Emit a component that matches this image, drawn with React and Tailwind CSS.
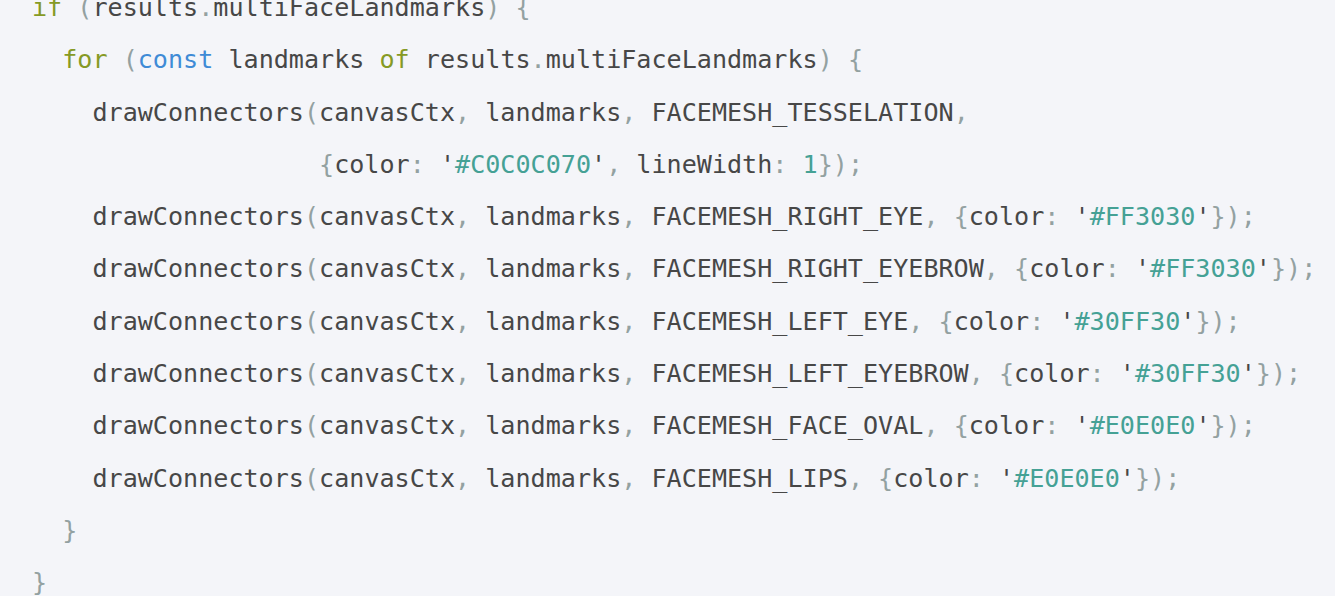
const lines = [
  "if (results.multiFaceLandmarks) {",
  "  for (const landmarks of results.multiFaceLandmarks) {",
  "    drawConnectors(canvasCtx, landmarks, FACEMESH_TESSELATION,",
  "                   {color: '#C0C0C070', lineWidth: 1});",
  "    drawConnectors(canvasCtx, landmarks, FACEMESH_RIGHT_EYE, {color: '#FF3030'});",
  "    drawConnectors(canvasCtx, landmarks, FACEMESH_RIGHT_EYEBROW, {color: '#FF3030'});",
  "    drawConnectors(canvasCtx, landmarks, FACEMESH_LEFT_EYE, {color: '#30FF30'});",
  "    drawConnectors(canvasCtx, landmarks, FACEMESH_LEFT_EYEBROW, {color: '#30FF30'});",
  "    drawConnectors(canvasCtx, landmarks, FACEMESH_FACE_OVAL, {color: '#E0E0E0'});",
  "    drawConnectors(canvasCtx, landmarks, FACEMESH_LIPS, {color: '#E0E0E0'});",
  "  }",
  "}",
];

const colors = {
  text: "text-[#474747]",
  punct: "text-[#93a1a1]",
  keyword: "text-[#869a25]",
  builtin: "text-[#3f8bd6]",
  string: "text-[#45a195]",
};

function tokenize(line) {
  const out = [];
  const re = /('[^']*')|(\b\d+\b)|([A-Za-z_][A-Za-z0-9_]*)|([(){},.:;])|(\s+)|(.)/g;
  let m;
  while ((m = re.exec(line))) {
    if (m[1]) {
      out.push(["'", "text"], [m[1].slice(1, -1), "string"], ["'", "text"]);
    } else if (m[2]) out.push([m[2], "string"]);
    else if (m[3]) {
      const w = m[3];
      if (w === "if" || w === "for" || w === "of") out.push([w, "keyword"]);
      else if (w === "const") out.push([w, "builtin"]);
      else out.push([w, "text"]);
    } else if (m[4]) out.push([m[4], "punct"]);
    else out.push([m[0], "text"]);
  }
  return out;
}

export default function App() {
  return (
    <div className="h-[614px] w-[1342px] overflow-hidden bg-white">
      <div className="h-full w-[1335px] bg-[#f4f5f9] pl-[32px]">
        <pre className="-mt-[18px] font-['DejaVu_Sans_Mono',monospace] text-[25.1px] leading-[52.3px] text-[#474747]">
          {lines.map((line, i) => (
            <div key={i} className="whitespace-pre">
              {tokenize(line).map(([t, type], j) => (
                <span key={j} className={colors[type]}>{t}</span>
              ))}
            </div>
          ))}
        </pre>
      </div>
    </div>
  );
}
